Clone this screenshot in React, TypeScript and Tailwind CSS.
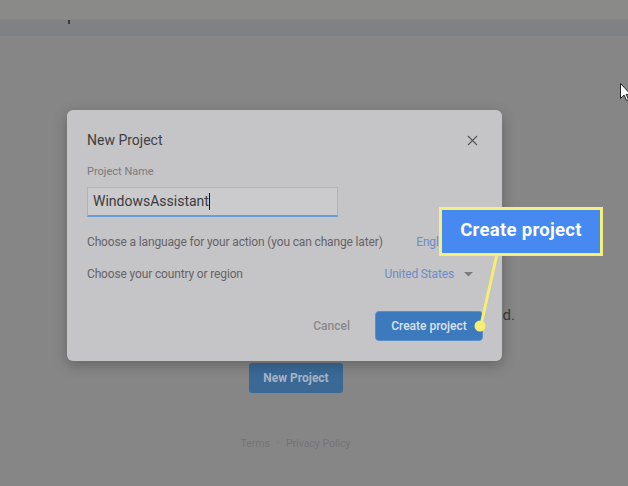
import React from 'react';
import {X} from 'lucide-react';

const font = {fontFamily: 'Roboto, "Noto Sans", sans-serif'};

const Caret = () => (
    <svg width="9" height="5" viewBox="0 0 9 5" className="ml-[10px]">
        <path d="M0 0h9L4.5 4.5z" fill="#7d7d80"/>
    </svg>
);

const Pointer = () => (
    <svg width="10" height="18" viewBox="0 0 10 18">
        <path d="M0.5 0.5v15l3.6-3.4 2.4 5.4 2-0.9-2.3-5.2h4.6z" fill="#fff" stroke="#222" strokeWidth="1"/>
    </svg>
);

const NewProjectDialog: React.FC = () => {
    return (
        <div className="absolute left-[67px] top-[110px] w-[435px] rounded-[6px] bg-[#c5c4c6] px-[20px] pt-[20px] pb-[20px] shadow-[0_4px_14px_rgba(0,0,0,0.25)]">
            <div className="flex items-center justify-between">
                <h2 className="text-[14px] leading-5 text-[#3f3f41]">New Project</h2>
                <X className="w-[17px] h-[17px] mr-[1px] text-[#555557]" strokeWidth={1.6}/>
            </div>

            <p className="mt-[14px] text-[11px] leading-4 text-[#7b7b7d]">Project Name</p>
            <div className="mt-[7px] w-[251px] h-[30px] flex items-center bg-[#cbcacc] border border-[#b3b3b5] border-b-2 border-b-[#6c9bd6] px-[5px]">
                <span className="text-[14px] text-[#3a3a3c]">WindowsAssistant</span>
                <span className="w-px h-[17px] bg-[#111]"></span>
            </div>

            <div className="mt-[15px] flex items-center justify-between h-5 text-[12px] tracking-[-0.15px]">
                <span className="text-[#656567]">Choose a language for your action (you can change later)</span>
                <span className="flex items-center pr-[9px] text-[#6a8dc6]">English<Caret/></span>
            </div>
            <div className="mt-[12px] flex items-center justify-between h-5 text-[12px] tracking-[-0.15px]">
                <span className="text-[#656567]">Choose your country or region</span>
                <span className="flex items-center pr-[9px] text-[#6a8dc6]">United States<Caret/></span>
            </div>

            <div className="mt-[27px] flex items-center justify-end gap-[25px]">
                <button className="text-[12px] leading-none font-medium text-[#8a8a8c]">Cancel</button>
                <button className="h-[30px] w-[108px] rounded-[4px] bg-[#3d7abd] border border-[#5b8fca] text-[12px] leading-none font-medium text-[#dbe3ee] mr-[-1px]">
                    Create project
                </button>
            </div>
        </div>
    );
};

const Callout: React.FC = () => (
    <>
        <svg className="absolute left-0 top-0" width="628" height="486">
            <line x1="497" y1="254" x2="481" y2="325" stroke="#f6ee72" strokeWidth="3"/>
            <circle cx="480" cy="326" r="5.5" fill="#f6ee72"/>
        </svg>
        <div className="absolute left-[439px] top-[207px] w-[164px] h-[49px] border-[3px] border-[#f6ef7c] bg-[#4589f1] flex items-center justify-center">
            <span className="text-[18.5px] leading-none font-bold text-white tracking-[0.3px] -mt-[3px]">Create project</span>
        </div>
    </>
);

export default function App() {
    return (
        <div className="relative w-[628px] h-[486px] overflow-hidden bg-[#878687]" style={font}>
            {/* page behind the dialog */}
            <div className="h-[19px] bg-[#8a8a89]"></div>
            <div className="h-[16px] bg-[#808185] pl-[68px]">
                <div className="w-[2px] h-[4px] mt-px bg-[#3a3a3c]"></div>
            </div>

            <div className="flex flex-col items-center">
                <p className="mt-[272px] w-[628px] pr-[113px] text-right text-[15px] leading-none text-[#3b3b3c]">
                    d.
                </p>
                <div className="mt-[40px] pr-[36px]">
                    <button className="h-[30px] w-[94px] rounded-[3px] bg-[#3b6996] text-[12px] font-bold text-[#a8b5c5]">
                        New Project
                    </button>
                </div>
                <p className="mt-[43px] pr-[37px] text-[10.5px] text-[#747476]">
                    Terms <span className="mx-[4px]">·</span> Privacy Policy
                </p>
            </div>

            <NewProjectDialog/>
            <Callout/>

            <div className="absolute left-[620px] top-[83px]">
                <Pointer/>
            </div>
        </div>
    );
}
